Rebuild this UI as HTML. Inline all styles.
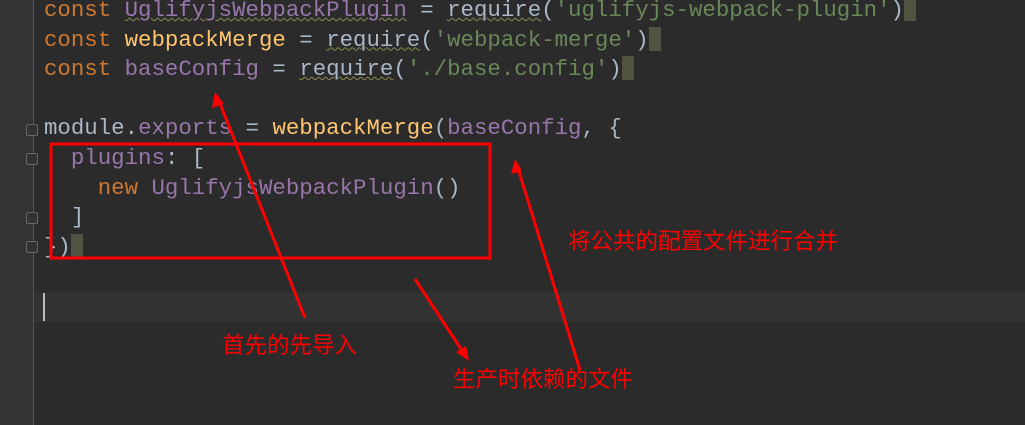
<!DOCTYPE html>
<html><head><meta charset="utf-8"><style>
body{margin:0;width:1025px;height:425px;background:#2b2b2b;position:relative;overflow:hidden;font-family:"Liberation Mono",monospace;}
.gut{position:absolute;left:0;top:0;width:33px;height:425px;background:#313335;border-right:1px solid #555;}
.cur{position:absolute;left:34px;top:292px;width:991px;height:30px;background:#323232;}
.code{position:absolute;left:44px;top:-4px;font-size:22.4px;line-height:29.6px;color:#a9b7c6;white-space:pre;}
.k{color:#cc7832}.p{color:#9876aa}.y{color:#ffc66d}.s{color:#6a8759}.u{text-decoration:underline wavy #8a8a50;text-decoration-thickness:1px}
.blk{display:inline-block;width:12px;height:24px;background:#525240;vertical-align:-5px}
.caret{position:absolute;left:43px;top:293px;width:2px;height:28px;background:#bbb}
.t{position:absolute;color:#f00;font-family:"Liberation Sans","Noto Sans CJK SC",sans-serif;font-size:22.5px;line-height:24px;white-space:nowrap}
.fold{position:absolute;left:26px;width:10px;height:10px;border:1px solid #666;border-radius:2px;background:#313335}
</style></head><body>
<div class="gut"></div>
<div class="cur"></div>
<div class="fold" style="top:124px"></div>
<div class="fold" style="top:153px"></div>
<div class="fold" style="top:212px"></div>
<div class="fold" style="top:241px"></div>
<div class="code"><span class="k">const</span> <span class="p u">UglifyjsWebpackPlugin</span> = <span class="u">require</span>(<span class="s">'uglifyjs-webpack-plugin'</span>)<span class="blk"></span>
<span class="k">const</span> <span class="y">webpackMerge</span> = <span class="u">require</span>(<span class="s">'webpack-merge'</span>)<span class="blk"></span>
<span class="k">const</span> <span class="p">baseConfig</span> = <span class="u">require</span>(<span class="s">'./base.config'</span>)<span class="blk"></span>

module.<span class="p">exports</span> = <span class="y">webpackMerge</span>(<span class="p">baseConfig</span>, {
  <span class="p">plugins</span>: [
    <span class="k">new</span> <span class="p">UglifyjsWebpackPlugin</span>()
  ]
})<span class="blk"></span>
</div>
<div class="caret"></div>
<svg style="position:absolute;left:0;top:0" width="1025" height="425">
<rect x="51" y="144" width="439" height="114" fill="none" stroke="#f00" stroke-width="3"/>
<g stroke="#f00" stroke-width="3" fill="#f00">
<line x1="305" y1="318" x2="217" y2="96"/>
<polygon points="215,92 212,108 224,104" stroke="none"/>
<line x1="415" y1="279" x2="465" y2="355"/>
<polygon points="469,361 456,352 466,346" stroke="none"/>
<line x1="580" y1="370" x2="517" y2="165"/>
<polygon points="515,159 511,174 522,171" stroke="none"/>
</g>
</svg>
<div class="t" style="left:568px;top:230px">将公共的配置文件进行合并</div>
<div class="t" style="left:222px;top:334px">首先的先导入</div>
<div class="t" style="left:453px;top:368px">生产时依赖的文件</div>
</body></html>
